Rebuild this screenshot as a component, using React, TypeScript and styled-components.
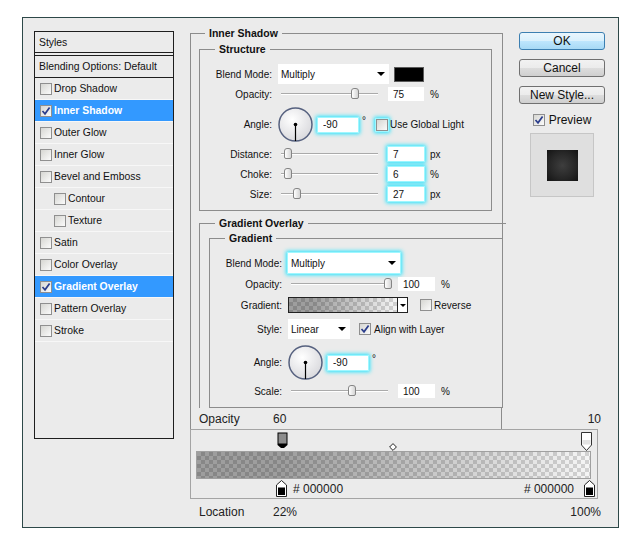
import React from "react";
import styled, { createGlobalStyle, css } from "styled-components";

const GlobalStyle = createGlobalStyle`
  * { box-sizing: border-box; }
  html, body { margin: 0; padding: 0; background: #ffffff; }
  body {
    font-family: "Liberation Sans", Arial, sans-serif;
    font-size: 10px;
    color: #111;
  }
`;

const glow = css`
  box-shadow: 0 0 0 1px #9ff7ff, 0 0 4px 2px #22e4ff;
`;

const Dialog = styled.div`
  margin: 17px 0 0 22px;
  width: 597px;
  height: 511px;
  border: 1px solid #2d4848;
  background: #ebebeb;
  display: grid;
  grid-template-columns: 140px 415px;
  column-gap: 16px;
  align-items: start;
  padding: 8px 0 0 11px;
`;

/* ---------- left list ---------- */

const StylesList = styled.div`
  margin-top: 5px;
  height: 408px;
  border: 1px solid #1e1e1e;
  display: flex;
  flex-direction: column;
  font-size: 10.4px;
`;

const ListHeader = styled.div<{ $double?: boolean }>`
  height: ${(p) => (p.$double ? 24 : 22)}px;
  display: flex;
  align-items: center;
  padding-left: 4px;
  border-bottom: ${(p) => (p.$double ? "4px double #1e1e1e" : "1px solid #1e1e1e")};
`;

const ListItem = styled.div<{ $selected?: boolean; $indent?: boolean }>`
  height: 22px;
  display: flex;
  align-items: center;
  gap: 2px;
  padding-left: ${(p) => (p.$indent ? 19 : 5)}px;
  border-bottom: 1px solid #f7f7f7;
  background: ${(p) => (p.$selected ? "#3399ff" : "transparent")};
  color: ${(p) => (p.$selected ? "#ffffff" : "#111")};
  font-weight: ${(p) => (p.$selected ? "bold" : "normal")};
`;

const Box = styled.span<{ $glow?: boolean }>`
  width: 12px;
  height: 12px;
  flex: none;
  border: 1px solid #8f8f8f;
  background: linear-gradient(135deg, #d6d6d2, #fbfbfb);
  display: inline-flex;
  align-items: center;
  justify-content: center;
  ${(p) => p.$glow && glow}
`;

const Checkbox = ({ checked, glowing }: { checked?: boolean; glowing?: boolean }) => (
  <Box $glow={glowing}>
    {checked && (
      <svg width="10" height="10" viewBox="0 0 10 10">
        <path d="M1.5 5 L4 7.8 L8.6 1.4" fill="none" stroke="#2b3d8c" strokeWidth="1.7" />
      </svg>
    )}
  </Box>
);

/* ---------- right side ---------- */

const RightCol = styled.div`
  display: flex;
  flex-direction: column;
`;

const TopRow = styled.div`
  display: flex;
  align-items: flex-start;
`;

const InnerShadowSet = styled.fieldset`
  margin: 0;
  min-width: 0;
  width: 313px;
  border: 1px solid #8c8c8c;
  border-bottom: none;
  padding: 2px 10px 0 8px;
`;

const StructureSet = styled.fieldset`
  margin: 0;
  min-width: 0;
  border: 1px solid #8c8c8c;
  padding: 8px 0 8px 0;
`;

const GradientOverlaySet = styled.fieldset`
  margin: 5px -14px 0 0;
  min-width: 0;
  border: none;
  border-top: 1px solid #8c8c8c;
  border-left: 1px solid #8c8c8c;
  padding: 1px 0 0 9px;
`;

const GradientSet = styled.fieldset`
  margin: 0 4px 0 0;
  min-width: 0;
  border: 1px solid #8c8c8c;
  border-right: none;
  padding: 8px 0 8px 0;
`;

const Legend = styled.legend<{ $offset: number }>`
  margin-left: ${(p) => p.$offset}px;
  padding: 0 4px;
  font-weight: bold;
  font-size: 10.5px;
  line-height: 14px;
  color: #111;
`;

const FormRow = styled.div<{ $h: number; $mt?: number }>`
  display: flex;
  align-items: center;
  height: ${(p) => p.$h}px;
  margin-top: ${(p) => p.$mt ?? 0}px;
`;

const Label = styled.span`
  width: 72px;
  margin-right: 6px;
  text-align: right;
  flex: none;
`;

const Select = styled.div<{ $w: number; $glow?: boolean }>`
  width: ${(p) => p.$w}px;
  height: 20px;
  background: #ffffff;
  display: flex;
  align-items: center;
  justify-content: space-between;
  padding: 0 4px 0 3px;
  ${(p) => p.$glow && glow}
`;

const Caret = styled.span`
  width: 0;
  height: 0;
  border-left: 4px solid transparent;
  border-right: 4px solid transparent;
  border-top: 4px solid #000;
`;

const Swatch = styled.span`
  width: 30px;
  height: 15px;
  margin-left: 5px;
  background: #000;
  border: 1px solid #5a5a5a;
`;

const SliderWrap = styled.div`
  width: 110px;
  padding-left: 3px;
  flex: none;
  display: flex;
  align-items: center;
`;

const Track = styled.div`
  position: relative;
  width: 97px;
  height: 2px;
  background: #aaaaaa;
  border-bottom: 1px solid #ffffff;
`;

const Thumb = styled.span<{ $pos: number }>`
  position: absolute;
  left: calc(${(p) => p.$pos * 100}% - 4px);
  top: -5px;
  width: 8px;
  height: 11px;
  border: 1px solid #858585;
  border-radius: 3px 3px 2px 2px;
  background: linear-gradient(to right, #ffffff, #d4d4d4);
`;

const Slider = ({ pos }: { pos: number }) => (
  <SliderWrap>
    <Track>
      <Thumb $pos={pos} />
    </Track>
  </SliderWrap>
);

const Field = styled.input<{ $w: number; $glow?: boolean; $ml?: number }>`
  width: ${(p) => p.$w}px;
  height: 14px;
  margin-left: ${(p) => p.$ml ?? 0}px;
  border: none;
  outline: none;
  padding: 0 5px;
  background: #ffffff;
  font: inherit;
  color: #111;
  flex: none;
  ${(p) => p.$glow && glow}
`;

const Unit = styled.span`
  margin-left: 6px;
`;

const Degree = styled.span`
  margin-left: 4px;
  margin-bottom: 9px;
`;

const Inline = styled.span<{ $ml: number; $gap: number }>`
  display: inline-flex;
  align-items: center;
  gap: ${(p) => p.$gap}px;
  margin-left: ${(p) => p.$ml}px;
`;

const GradientSwatch = styled.div`
  width: 120px;
  height: 16px;
  border: 1px solid #222;
  display: flex;
`;

const checker = css`
  background-color: #ffffff;
  background-image: linear-gradient(to right, rgba(0, 0, 0, 0.38) 22%, rgba(0, 0, 0, 0.04) 100%),
    conic-gradient(#dadada 90deg, #ffffff 90deg 180deg, #dadada 180deg 270deg, #ffffff 270deg);
  background-size: 100% 100%, 8px 8px;
`;

const SwatchFill = styled.div`
  flex: 1;
  ${checker}
`;

const SwatchDrop = styled.div`
  width: 10px;
  border-left: 1px solid #222;
  background: #ffffff;
  display: flex;
  align-items: center;
  justify-content: center;
  ${Caret} {
    border-left-width: 3px;
    border-right-width: 3px;
    border-top-width: 3px;
  }
`;

const Dial = () => (
  <svg width="35" height="35" viewBox="0 0 35 35">
    <defs>
      <radialGradient id="dialFill" cx="40%" cy="35%" r="70%">
        <stop offset="0" stopColor="#ffffff" />
        <stop offset="1" stopColor="#d8d8dc" />
      </radialGradient>
    </defs>
    <circle cx="17.5" cy="17.5" r="16.5" fill="url(#dialFill)" stroke="#56617f" strokeWidth="1.5" />
    <line x1="17.5" y1="17.5" x2="17.5" y2="34" stroke="#000" strokeWidth="1.2" />
    <circle cx="17.5" cy="17.5" r="1.8" fill="#000" />
  </svg>
);

/* ---------- buttons ---------- */

const ButtonCol = styled.div`
  width: 86px;
  margin: 6px 0 0 16px;
  display: flex;
  flex-direction: column;
  gap: 9px;
`;

const Button = styled.button<{ $default?: boolean }>`
  height: 18px;
  padding: 0;
  font-family: inherit;
  font-size: 12px;
  color: #111;
  border-radius: 3px;
  border: 1px solid ${(p) => (p.$default ? "#3c7fb1" : "#707070")};
  background: ${(p) =>
    p.$default
      ? "linear-gradient(#eaf6fd, #d9f0fc 50%, #bee6fd 51%, #a7d9f5)"
      : "linear-gradient(#f2f2f2, #ebebeb 50%, #dddddd 51%, #cfcfcf)"};
`;

const PreviewRow = styled.div`
  height: 14px;
  display: flex;
  align-items: center;
  justify-content: center;
  gap: 4px;
  font-size: 12px;
`;

const PreviewBox = styled.div`
  align-self: center;
  margin-top: -3px;
  width: 64px;
  height: 64px;
  background: #dfdfdf;
  border: 1px solid #c6c6c6;
  display: flex;
  align-items: center;
  justify-content: center;
`;

const PreviewSquare = styled.div`
  width: 31px;
  height: 31px;
  background: radial-gradient(circle, #3e3e3e 0%, #262626 60%, #131313 100%);
`;

/* ---------- gradient editor ---------- */

const InfoRow = styled.div<{ $lined?: boolean }>`
  width: 411px;
  height: ${(p) => (p.$lined ? 21 : 25)}px;
  display: flex;
  align-items: center;
  font-size: 12px;
  color: #222;
  padding-left: ${(p) => (p.$lined ? 8 : 9)}px;
  border-left: ${(p) => (p.$lined ? "1px solid #8c8c8c" : "none")};
`;

const InfoLabel = styled.span`
  width: 74px;
  flex: none;
`;

const InfoCell = styled.span<{ $lined?: boolean }>`
  width: 229px;
  align-self: stretch;
  display: flex;
  align-items: center;
  border-right: ${(p) => (p.$lined ? "1px solid #8c8c8c" : "none")};
`;

const InfoEnd = styled.span`
  margin-left: auto;
`;

const Editor = styled.div`
  width: 408px;
  height: 70px;
  border: 1px solid #a4a4a4;
  display: flex;
  flex-direction: column;
`;

const StopTrack = styled.div`
  position: relative;
  height: 21px;
`;

const Marker = styled.span<{ $pos: number; $top: number; $w: number }>`
  position: absolute;
  top: ${(p) => p.$top}px;
  left: ${(p) => 5 + p.$pos * 394 - p.$w / 2}px;
  display: block;
  line-height: 0;
`;

const GradientBar = styled.div`
  height: 28px;
  margin: 0 6px 0 5px;
  border: 1px solid #a0a0a0;
  ${checker}
`;

const ColorStops = styled.div`
  height: 19px;
  display: flex;
  align-items: center;
  padding: 0 2px 0 85px;
  font-size: 12px;
  color: #222;
`;

const HexLeft = styled.span`
  margin-left: 6px;
`;

const HexRight = styled.span`
  margin: 0 10px 0 auto;
`;

const OpacityStop = ({ selected }: { selected?: boolean }) => (
  <svg width="11" height="19" viewBox="0 0 11 19">
    {selected ? (
      <>
        <path d="M0.5 0.5 H10.5 V13 L7 16 H4 L0.5 13 Z" fill="#000" />
        <rect x="1.5" y="1.5" width="8" height="10" fill="#8c8c8c" />
      </>
    ) : (
      <>
        <path d="M0.5 0.5 H10.5 V13 L5.5 18.5 L0.5 13 Z" fill="#fff" stroke="#333" />
        <rect x="1.5" y="8" width="8" height="4.5" fill="#e2e2e2" />
      </>
    )}
  </svg>
);

const ColorStop = () => (
  <svg width="11" height="17" viewBox="0 0 11 17">
    <path d="M5.5 0.5 L10.5 5 V16.5 H0.5 V5 Z" fill="#fff" stroke="#222" />
    <rect x="2" y="7.5" width="7" height="7.5" fill="#000" />
  </svg>
);

const Diamond = () => (
  <svg width="8" height="8" viewBox="0 0 8 8">
    <path d="M4 0.6 L7.4 4 L4 7.4 L0.6 4 Z" fill="#fff" stroke="#222" />
  </svg>
);

const styleItems = [
  { label: "Drop Shadow" },
  { label: "Inner Shadow", checked: true, selected: true },
  { label: "Outer Glow" },
  { label: "Inner Glow" },
  { label: "Bevel and Emboss" },
  { label: "Contour", indent: true },
  { label: "Texture", indent: true },
  { label: "Satin" },
  { label: "Color Overlay" },
  { label: "Gradient Overlay", checked: true, selected: true },
  { label: "Pattern Overlay" },
  { label: "Stroke" },
];

const App = () => {
  return (
    <>
      <GlobalStyle />
      <Dialog>
        <StylesList>
          <ListHeader $double>Styles</ListHeader>
          <ListHeader>Blending Options: Default</ListHeader>
          {styleItems.map((item) => (
            <ListItem key={item.label} $selected={item.selected} $indent={item.indent}>
              <Checkbox checked={item.checked} />
              {item.label}
            </ListItem>
          ))}
        </StylesList>

        <RightCol>
          <TopRow>
            <InnerShadowSet>
              <Legend $offset={6}>Inner Shadow</Legend>
              <StructureSet>
                <Legend $offset={15}>Structure</Legend>
                <FormRow $h={20}>
                  <Label>Blend Mode:</Label>
                  <Select $w={111}>
                    Multiply
                    <Caret />
                  </Select>
                  <Swatch />
                </FormRow>
                <FormRow $h={16} $mt={2}>
                  <Label>Opacity:</Label>
                  <Slider pos={0.76} />
                  <Field $w={36} readOnly value="75" />
                  <Unit>%</Unit>
                </FormRow>
                <FormRow $h={35} $mt={5}>
                  <Label>Angle:</Label>
                  <Dial />
                  <Field $w={40} $ml={5} $glow readOnly value="-90" />
                  <Degree>°</Degree>
                  <Inline $ml={10} $gap={2}>
                    <Checkbox glowing />
                    Use Global Light
                  </Inline>
                </FormRow>
                <FormRow $h={16} $mt={4}>
                  <Label>Distance:</Label>
                  <Slider pos={0.07} />
                  <Field $w={36} $glow readOnly value="7" />
                  <Unit>px</Unit>
                </FormRow>
                <FormRow $h={16} $mt={4}>
                  <Label>Choke:</Label>
                  <Slider pos={0.07} />
                  <Field $w={36} $glow readOnly value="6" />
                  <Unit>%</Unit>
                </FormRow>
                <FormRow $h={16} $mt={4}>
                  <Label>Size:</Label>
                  <Slider pos={0.17} />
                  <Field $w={36} $glow readOnly value="27" />
                  <Unit>px</Unit>
                </FormRow>
              </StructureSet>

              <GradientOverlaySet>
                <Legend $offset={6}>Gradient Overlay</Legend>
                <GradientSet>
                  <Legend $offset={15}>Gradient</Legend>
                  <FormRow $h={20}>
                    <Label>Blend Mode:</Label>
                    <Select $w={112} $glow>
                      Multiply
                      <Caret />
                    </Select>
                  </FormRow>
                  <FormRow $h={16} $mt={3}>
                    <Label>Opacity:</Label>
                    <Slider pos={1} />
                    <Field $w={37} readOnly value="100" />
                    <Unit>%</Unit>
                  </FormRow>
                  <FormRow $h={16} $mt={5}>
                    <Label>Gradient:</Label>
                    <GradientSwatch>
                      <SwatchFill />
                      <SwatchDrop>
                        <Caret />
                      </SwatchDrop>
                    </GradientSwatch>
                    <Inline $ml={12} $gap={2}>
                      <Checkbox />
                      Reverse
                    </Inline>
                  </FormRow>
                  <FormRow $h={20} $mt={6}>
                    <Label>Style:</Label>
                    <Select $w={62}>
                      Linear
                      <Caret />
                    </Select>
                    <Inline $ml={9} $gap={3}>
                      <Checkbox checked />
                      Align with Layer
                    </Inline>
                  </FormRow>
                  <FormRow $h={35} $mt={6}>
                    <Label>Angle:</Label>
                    <Dial />
                    <Field $w={40} $ml={5} $glow readOnly value="-90" />
                    <Degree>°</Degree>
                  </FormRow>
                  <FormRow $h={16} $mt={3}>
                    <Label>Scale:</Label>
                    <Slider pos={0.63} />
                    <Field $w={37} readOnly value="100" />
                    <Unit>%</Unit>
                  </FormRow>
                </GradientSet>
              </GradientOverlaySet>
            </InnerShadowSet>

            <ButtonCol>
              <Button $default>OK</Button>
              <Button>Cancel</Button>
              <Button>New Style...</Button>
              <PreviewRow>
                <Checkbox checked />
                Preview
              </PreviewRow>
              <PreviewBox>
                <PreviewSquare />
              </PreviewBox>
            </ButtonCol>
          </TopRow>

          <InfoRow $lined>
            <InfoLabel>Opacity</InfoLabel>
            <InfoCell $lined>60</InfoCell>
            <InfoEnd>10</InfoEnd>
          </InfoRow>

          <Editor>
            <StopTrack>
              <Marker $pos={0.22} $top={2} $w={11}>
                <OpacityStop selected />
              </Marker>
              <Marker $pos={0.5} $top={13} $w={8}>
                <Diamond />
              </Marker>
              <Marker $pos={0.99} $top={2} $w={11}>
                <OpacityStop />
              </Marker>
            </StopTrack>
            <GradientBar />
            <ColorStops>
              <ColorStop />
              <HexLeft># 000000</HexLeft>
              <HexRight># 000000</HexRight>
              <ColorStop />
            </ColorStops>
          </Editor>

          <InfoRow>
            <InfoLabel>Location</InfoLabel>
            <InfoCell>22%</InfoCell>
            <InfoEnd>100%</InfoEnd>
          </InfoRow>
        </RightCol>
      </Dialog>
    </>
  );
};

export default App;
